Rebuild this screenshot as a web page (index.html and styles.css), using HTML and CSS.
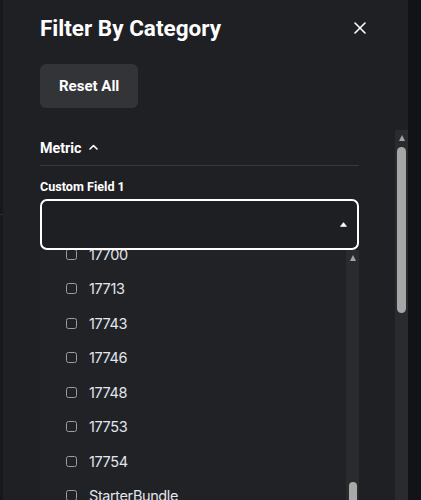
FILE: index.html
```html
<!DOCTYPE html>
<html lang="en">
<head>
<meta charset="utf-8">
<title>Filter By Category</title>
<link rel="stylesheet" href="styles.css">
</head>
<body>
<div class="page">
  <div class="edge-left"><span class="edge-line"></span></div>
  <aside class="drawer">
    <header class="drawer-head">
      <h2 class="title">Filter By Category</h2>
      <button class="close" aria-label="Close">
        <svg width="12" height="12" viewBox="0 0 12 12"><path d="M1 1 L11 11 M11 1 L1 11" stroke="#ffffff" stroke-width="1.6" stroke-linecap="round" fill="none"/></svg>
      </button>
    </header>
    <div class="actions"><button class="reset">Reset All</button></div>
    <div class="scroll-area">
      <div class="scroll-content">
        <div class="section-head">
          <span>Metric</span>
          <svg class="chev" width="9" height="6" viewBox="0 0 9 6"><path d="M1 5 L4.5 1.5 L8 5" stroke="#ffffff" stroke-width="1.6" fill="none" stroke-linecap="round" stroke-linejoin="round"/></svg>
        </div>
        <div class="divider"></div>
        <div class="field-label">Custom Field 1</div>
        <div class="select">
          <svg class="caret" width="7" height="5" viewBox="0 0 7 5"><path d="M3.5 0.6 L6.6 4.4 L0.4 4.4 Z" fill="#ffffff" stroke="#ffffff" stroke-width="0.6" stroke-linejoin="round"/></svg>
        </div>
        <div class="listbox">
          <ul class="options">
            <li class="option"><span class="box"></span><span class="opt-text">17700</span></li>
            <li class="option"><span class="box"></span><span class="opt-text">17713</span></li>
            <li class="option"><span class="box"></span><span class="opt-text">17743</span></li>
            <li class="option"><span class="box"></span><span class="opt-text">17746</span></li>
            <li class="option"><span class="box"></span><span class="opt-text">17748</span></li>
            <li class="option"><span class="box"></span><span class="opt-text">17753</span></li>
            <li class="option"><span class="box"></span><span class="opt-text">17754</span></li>
            <li class="option"><span class="box"></span><span class="opt-text">StarterBundle</span></li>
          </ul>
          <div class="list-scrollbar">
            <span class="arrow-up small"></span>
            <span class="list-thumb"></span>
          </div>
        </div>
      </div>
      <div class="scrollbar">
        <span class="arrow-up"></span>
        <span class="thumb"></span>
      </div>
    </div>
  </aside>
  <div class="edge-right"></div>
</div>
</body>
</html>
```
FILE: styles.css
```css
* { box-sizing: border-box; }
html, body { margin: 0; padding: 0; }
body {
  background: #1f2024;
  font-family: Roboto, "Liberation Sans", Arial, sans-serif;
  color: #ffffff;
  overflow: hidden;
  height: 500px;
}
.page {
  display: flex;
  height: 500px;
  overflow: hidden;
}
.edge-left {
  width: 3px;
  background: #17181b;
  display: flex;
  flex-direction: column;
}
.edge-line {
  display: block;
  height: 1px;
  margin-top: 214px;
  background: #2c2d31;
}
.edge-right {
  width: 13px;
  background: #121317;
}
.drawer {
  width: 405px;
  background: #1f2024;
  display: flex;
  flex-direction: column;
  height: 500px;
}
.drawer > * { flex-shrink: 0; }
.drawer-head {
  height: 55px;
  display: flex;
  align-items: center;
  justify-content: space-between;
  padding: 0 36px 0 37px;
}
.title {
  margin: 0;
  font-size: 22.5px;
  line-height: 26px;
  font-weight: 700;
  color: #ffffff;
}
.close {
  width: 24px;
  height: 24px;
  padding: 0;
  border: 0;
  background: transparent;
  display: flex;
  align-items: center;
  justify-content: center;
}
.actions {
  padding: 9px 37px 22px;
  display: flex;
}
.reset {
  height: 44px;
  padding: 0 19px;
  border: 0;
  border-radius: 6px;
  background: #333438;
  color: #ffffff;
  font-family: inherit;
  font-size: 15px;
  font-weight: 700;
}
.drawer > .scroll-area {
  flex: 1 1 auto;
  display: flex;
  min-height: 0;
  overflow: hidden;
}
.scroll-content {
  flex: 1;
  padding: 0 36px 0 37px;
  display: flex;
  flex-direction: column;
}
.scroll-content > * { flex-shrink: 0; }
.section-head {
  height: 35px;
  display: flex;
  align-items: center;
  gap: 7px;
  font-size: 14.3px;
  font-weight: 700;
}
.chev { margin-top: -2px; }
.divider {
  height: 1px;
  background: #37383c;
}
.field-label {
  margin-top: 12px;
  font-size: 12.6px;
  line-height: 18px;
  font-weight: 700;
}
.select {
  margin-top: 3px;
  height: 51px;
  border: 2px solid #ffffff;
  border-radius: 7px;
  background: #1e1f23;
  display: flex;
  align-items: center;
  justify-content: flex-end;
  padding-right: 10px;
}
.caret { margin-top: -1px; }
.listbox {
  height: 270px;
  display: flex;
  background: #212226;
  overflow: hidden;
}
.options {
  flex: 1;
  list-style: none;
  margin: -13px 0 0;
  padding: 0 0 0 26px;
}
.option {
  height: 34.5px;
  display: flex;
  align-items: center;
  gap: 12px;
}
.box {
  width: 11px;
  height: 11px;
  border: 1.5px solid #9d9d9d;
  border-radius: 2.5px;
  flex-shrink: 0;
}
.opt-text {
  font-family: Inter, Roboto, sans-serif;
  font-size: 14.5px;
  color: #e2e6ee;
  font-variant-numeric: proportional-nums;
  letter-spacing: -0.4px;
}
.list-scrollbar {
  width: 13px;
  flex-shrink: 0;
  background: #2b2b2e;
  display: flex;
  flex-direction: column;
  align-items: center;
}
.arrow-up {
  width: 0;
  height: 0;
  border-left: 3.5px solid transparent;
  border-right: 3.5px solid transparent;
  border-bottom: 6px solid #a3a3a3;
  margin-top: 5px;
  flex-shrink: 0;
}
.list-thumb {
  width: 8px;
  height: 40px;
  border-radius: 4px;
  background: #a9a9a9;
  margin-top: 221px;
  flex-shrink: 0;
}
.scrollbar {
  width: 13px;
  flex-shrink: 0;
  background: #2a2b2e;
  display: flex;
  flex-direction: column;
  align-items: center;
}
.scrollbar .arrow-up {
  margin-top: 5px;
}
.thumb {
  width: 9px;
  height: 166px;
  border-radius: 5px;
  background: #a6a6a6;
  margin-top: 6px;
  flex-shrink: 0;
}
```
